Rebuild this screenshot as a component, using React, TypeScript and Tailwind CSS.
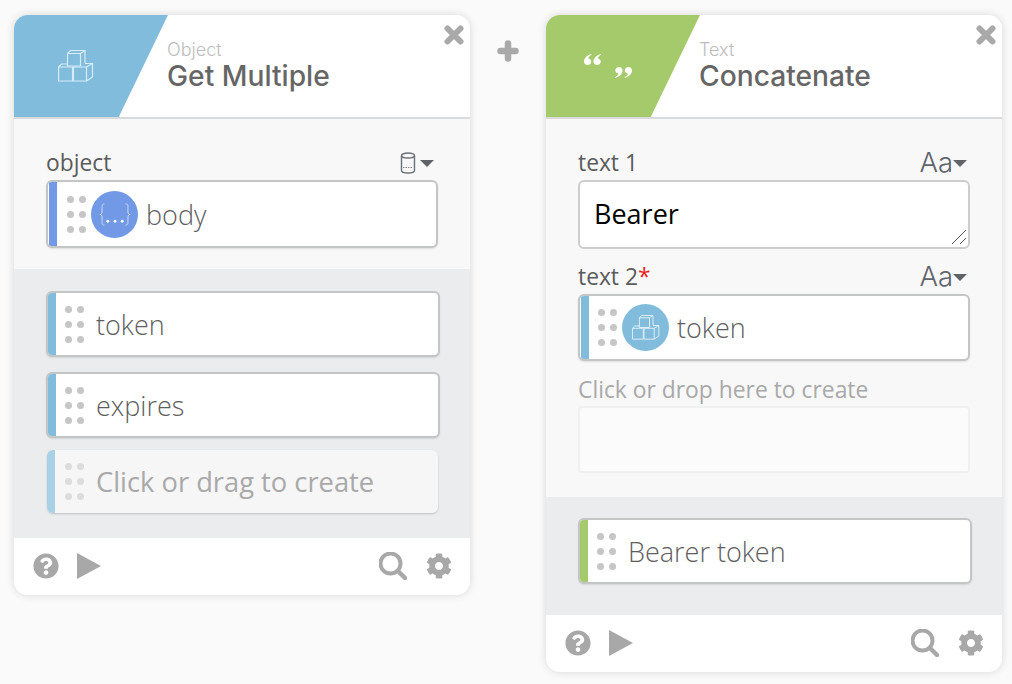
import type { ReactNode } from "react";
import { FaCog, FaQuestionCircle } from "react-icons/fa";

function CubesIcon({ className }: { className?: string }) {
  return (
    <svg viewBox="0 0 36 32" fill="none" stroke="currentColor" strokeWidth="1.200" className={className}>
      <path d="M9.500 3.500h13v12.500h-13z" />
      <path d="M9.500 3.500l3-3h14.500v12.500" />
      <path d="M22.500 3.500l4.500-3" />
      <path d="M.6 17h13.900v14H.6z" />
      <path d="M15.500 17h13v14h-13z" />
      <path d="M28.500 17l6-3.500V27l-6 4" />
      <path d="M27 13.500h7.500" />
      <path d="M.6 17l3-3h6" />
    </svg>
  );
}

function BracesIcon({ className }: { className?: string }) {
  return (
    <svg viewBox="0 0 34 24" fill="none" stroke="currentColor" className={className}>
      <path d="M6 1C3 1 3.500 3 3.500 6v3.500c0 1.500-.8 2.500-2.300 2.500 1.500 0 2.300 1 2.300 2.500V18c0 3-.5 5 2.500 5" strokeWidth="0.900" />
      <path d="M28 1c3 0 2.500 2 2.500 5v3.500c0 1.500.8 2.500 2.300 2.500-1.500 0-2.300 1-2.300 2.500V18c0 3 .5 5-2.500 5" strokeWidth="0.900" />
      <circle cx="9.500" cy="19" r="1.500" fill="#fff" stroke="none" />
      <circle cx="17" cy="19" r="1.500" fill="#fff" stroke="none" />
      <circle cx="24.500" cy="19" r="1.500" fill="#fff" stroke="none" />
    </svg>
  );
}

const quoteMark = "M7 0C2.500 1.500 0 4.500 0 7.500c0 2 1.500 3.500 3.500 3.500s3.700-1.300 3.700-3.300c0-1.800-1.300-3-3-3.100C4.500 3 5.500 1.800 7.600 .8z";

function QuotesIcon({ className }: { className?: string }) {
  return (
    <svg viewBox="0 0 48 24" fill="currentColor" className={className}>
      <path d={quoteMark} />
      <path d={quoteMark} transform="translate(9.500 0)" />
      <path d={quoteMark} transform="translate(38.500 24) rotate(180)" />
      <path d={quoteMark} transform="translate(48 24) rotate(180)" />
    </svg>
  );
}

function Grip({ faded }: { faded?: boolean }) {
  return (
    <div className="grid w-[17px] shrink-0 grid-cols-2 gap-x-[7px] gap-y-[8px]">
      {[0, 1, 2, 3, 4, 5].map((i) => (
        <span key={i} className={`h-[7px] w-[7px] rounded-full ${faded ? "bg-[#dcdcdc]" : "bg-[#c6c6c6]"}`} />
      ))}
    </div>
  );
}

interface PillProps {
  label: string;
  bar: string;
  icon?: ReactNode;
  frame?: string;
  inset?: string;
  faded?: boolean;
}

function Pill({ label, bar, icon, frame = "h-[66px]", inset = "pl-[9px]", faded }: PillProps) {
  return (
    <div
      className={`flex items-stretch overflow-hidden rounded-[6px] ${frame} ${
        faded
          ? "bg-[#f6f6f7] shadow-[0_1px_2px_rgba(0,0,0,0.18)]"
          : "border-2 border-[#c4c5c5] bg-white shadow-[0_1px_2px_rgba(0,0,0,0.1)]"
      }`}
    >
      <div className={`w-[8px] shrink-0 ${bar}`} />
      <div className={`flex flex-1 items-center ${inset}`}>
        <Grip faded={faded} />
        {icon}
        <span
          className={`leading-none ${
            faded
              ? "ml-[14px] pt-[1px] text-[27.300px] font-normal text-[#a9a9a9]"
              : icon
                ? "ml-[8px] text-[27px] font-light text-[#5e5e5e]"
                : "ml-[14px] text-[27px] font-light text-[#5e5e5e]"
          }`}
        >
          {label}
        </span>
      </div>
    </div>
  );
}

function FieldLabel({ children, right }: { children: ReactNode; right: ReactNode }) {
  return (
    <div className="flex h-[32px] items-center justify-between pb-[2px] pr-[3px] text-[22.800px] leading-none text-[#5b5b5b]">
      <span>{children}</span>
      <span className="flex items-center">{right}</span>
    </div>
  );
}

function TextMode() {
  return (
    <>
      <span className="font-['Inter',sans-serif] text-[27.500px] font-light leading-none text-[#5f656c]">Aa</span>
      <span className="h-0 w-0 border-x-[7.500px] border-t-[7px] border-x-transparent border-t-[#5f6368]" />
    </>
  );
}

function Header({ color, kind, title, icon }: { color: string; kind: string; title: string; icon: ReactNode }) {
  return (
    <div className="relative flex h-[104px] shrink-0 border-b-2 border-[#d9dadb] bg-white">
      <div className={`flex h-full w-[154px] items-center pl-[44px] [clip-path:polygon(0_0,100%_0,68%_100%,0_100%)] ${color}`}>
        {icon}
      </div>
      <div className="-ml-[1px] pt-[25px] font-['Inter',sans-serif]">
        <div className="text-[18px] font-light leading-[20px] text-[#bdbdbd]">{kind}</div>
        <div className="-mt-[1px] text-[28.200px] font-medium leading-[34px] text-[#666666]">{title}</div>
      </div>
      <svg viewBox="0 0 20 20" stroke="#a9a9a9" strokeWidth="6" strokeLinecap="round" className="absolute right-[6px] top-[10px] h-[20px] w-[20px]">
        <path d="M3.500 3.500l13 13M16.500 3.500l-13 13" />
      </svg>
    </div>
  );
}

function Footer() {
  return (
    <div className="flex h-[57px] shrink-0 items-center justify-between bg-white pb-[2px] pl-[19px] pr-[18px] text-[#a8a8a8]">
      <div className="flex items-center gap-[18px]">
        <FaQuestionCircle className="h-[26px] w-[26px]" />
        <svg viewBox="0 0 24 26" fill="currentColor" className="h-[26px] w-[24px]">
          <path d="M0 0l24 13L0 26z" />
        </svg>
      </div>
      <div className="flex items-center gap-[19px]">
        <svg viewBox="0 0 28 28" fill="none" stroke="currentColor" className="h-[28px] w-[28px]">
          <circle cx="11.500" cy="11.500" r="10" strokeWidth="4" />
          <path d="M19 19l7 7" strokeWidth="4.500" strokeLinecap="round" />
        </svg>
        <FaCog className="h-[26px] w-[26px]" />
      </div>
    </div>
  );
}

export default function App() {
  return (
    <div className="flex min-h-[684px] items-start bg-[#fafafa] pl-[14px] pt-[15px] font-['Open_Sans',sans-serif]">
      <div className="flex w-[456px] flex-col overflow-hidden rounded-[14px] bg-[#f8f8f8] shadow-[0_0_8px_rgba(0,0,0,0.14)]">
        <Header
          color="bg-[#81bcdc]"
          kind="Object"
          title="Get Multiple"
          icon={<CubesIcon className="h-[32px] w-[36px] text-[#d6ecf7]" />}
        />
        <div className="h-[150px] px-[32px] pt-[29px]">
          <FieldLabel
            right={
              <>
                <svg viewBox="0 0 16 22" fill="none" stroke="#6a7077" strokeWidth="1.400" className="h-[22px] w-[16px]">
                  <ellipse cx="8" cy="3.500" rx="6.500" ry="2.500" />
                  <path d="M1.500 3.500v15c0 1.500 2 2.500 6.500 2.500s6.500-1 6.500-2.500v-15" />
                  <path d="M3 15.500h10" strokeWidth="0.800" strokeDasharray="1.500 1" />
                </svg>
                <span className="ml-[4px] mr-[1px] h-0 w-0 border-x-[7px] border-t-[7px] border-x-transparent border-t-[#5f6368]" />
              </>
            }
          >
            object
          </FieldLabel>
          <Pill
            label="body"
            bar="bg-[#7199e5]"
            frame="h-[68px] pl-[1px]"
            inset="pl-[10px]"
            icon={
              <span className="ml-[7px] flex h-[47px] w-[47px] shrink-0 items-center justify-center rounded-full bg-[#7199e5]">
                <BracesIcon className="h-[23px] w-[34px] text-[#dbe6fa]" />
              </span>
            }
          />
        </div>
        <div className="flex h-[269px] flex-col bg-[#ebecee] px-[32px] pt-[22px]">
          <div className="w-[394px]">
            <Pill label="token" bar="bg-[#81bcdc]" />
            <div className="mt-[15px]">
              <Pill label="expires" bar="bg-[#81bcdc]" />
            </div>
            <div className="mx-[1px] mt-[12px] w-[391px]">
              <Pill label="Click or drag to create" bar="bg-[#a9d1e6]" frame="h-[63px]" inset="pl-[10px]" faded />
            </div>
          </div>
        </div>
        <Footer />
      </div>

      <div className="flex w-[76px] justify-center pt-[25px]">
        <svg viewBox="0 0 22 22" stroke="#a9a9a9" strokeWidth="6.500" strokeLinecap="round" className="h-[22px] w-[22px]">
          <path d="M11 3.500v15M3.500 11h15" />
        </svg>
      </div>

      <div className="flex w-[456px] flex-col overflow-hidden rounded-[14px] bg-[#f8f8f8] shadow-[0_0_8px_rgba(0,0,0,0.14)]">
        <Header
          color="bg-[#a5ca6b]"
          kind="Text"
          title="Concatenate"
          icon={<QuotesIcon className="-ml-[6px] -mt-[1px] h-[24px] w-[48px] text-white" />}
        />
        <div className="h-[378px] px-[32px] pt-[29px]">
          <FieldLabel right={<TextMode />}>text 1</FieldLabel>
          <div className="relative flex h-[69px] items-center rounded-[6px] border-2 border-[#cdcdcd] bg-white pl-[14px] text-[27px] text-black">
            Bearer
            <svg viewBox="0 0 14 14" stroke="#555" strokeWidth="1" className="absolute bottom-[3px] right-[2px] h-[14px] w-[14px]">
              <path d="M0 14L14 0M8 14l6-6" />
            </svg>
          </div>
          <div className="mt-[13px]">
            <FieldLabel right={<TextMode />}>
              text 2<span className="text-[#f01e1e]">*</span>
            </FieldLabel>
          </div>
          <Pill
            label="token"
            bar="bg-[#81bcdc]"
            frame="h-[67px] pl-[1px]"
            icon={
              <span className="ml-[7px] flex h-[47px] w-[47px] shrink-0 items-center justify-center rounded-full bg-[#81bcdc]">
                <CubesIcon className="h-[25px] w-[28px] text-[#e3f1f9]" />
              </span>
            }
          />
          <div className="mt-[13px] h-[32px] text-[22.850px] leading-[32px] text-[#a9a9a9]">Click or drop here to create</div>
          <div className="h-[67px] rounded-[4px] border-2 border-[#f0f0f0] bg-[#fbfbfb]" />
        </div>
        <div className="h-[118px] bg-[#ebecee] pl-[32px] pt-[21px]">
          <div className="w-[394px]">
            <Pill label="Bearer token" bar="bg-[#a5ca6b]" />
          </div>
        </div>
        <Footer />
      </div>
    </div>
  );
}
